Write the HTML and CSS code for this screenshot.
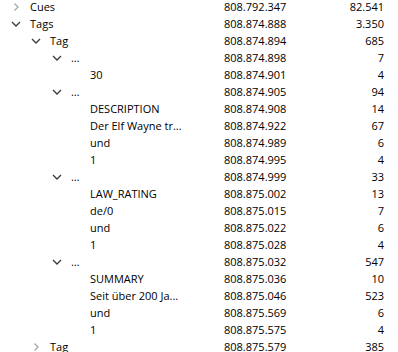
FILE: index.html
```
<!DOCTYPE html>
<html lang="en">
<head>
    <meta charset="UTF-8">
    <meta name="viewport" content="width=device-width, initial-scale=1.0">
    <title>Element tree</title>
    <link rel="stylesheet" href="styles.css">
</head>
<body>

    <div id="tree">
        <div class="row"><div class="name lvl-0"><span class="toggle closed"><svg viewBox="0 0 10 10"><polyline points="3.5,1.5 7,5 3.5,8.5"/></svg></span>Cues</div><div class="pos">808.792.347</div><div class="size">82.541</div></div>
        <div class="row"><div class="name lvl-0"><span class="toggle open"><svg viewBox="0 0 10 10"><polyline points="1,3 5,7 9,3"/></svg></span>Tags</div><div class="pos">808.874.888</div><div class="size">3.350</div></div>
        <div class="row"><div class="name lvl-1"><span class="toggle open"><svg viewBox="0 0 10 10"><polyline points="1,3 5,7 9,3"/></svg></span>Tag</div><div class="pos">808.874.894</div><div class="size">685</div></div>
        <div class="row"><div class="name lvl-2"><span class="toggle open"><svg viewBox="0 0 10 10"><polyline points="1,3 5,7 9,3"/></svg></span>…</div><div class="pos">808.874.898</div><div class="size">7</div></div>
        <div class="row"><div class="name lvl-3">30</div><div class="pos">808.874.901</div><div class="size">4</div></div>
        <div class="row"><div class="name lvl-2"><span class="toggle open"><svg viewBox="0 0 10 10"><polyline points="1,3 5,7 9,3"/></svg></span>…</div><div class="pos">808.874.905</div><div class="size">94</div></div>
        <div class="row"><div class="name lvl-3">DESCRIPTION</div><div class="pos">808.874.908</div><div class="size">14</div></div>
        <div class="row"><div class="name lvl-3">Der Elf Wayne tr...</div><div class="pos">808.874.922</div><div class="size">67</div></div>
        <div class="row"><div class="name lvl-3">und</div><div class="pos">808.874.989</div><div class="size">6</div></div>
        <div class="row"><div class="name lvl-3">1</div><div class="pos">808.874.995</div><div class="size">4</div></div>
        <div class="row"><div class="name lvl-2"><span class="toggle open"><svg viewBox="0 0 10 10"><polyline points="1,3 5,7 9,3"/></svg></span>…</div><div class="pos">808.874.999</div><div class="size">33</div></div>
        <div class="row"><div class="name lvl-3">LAW_RATING</div><div class="pos">808.875.002</div><div class="size">13</div></div>
        <div class="row"><div class="name lvl-3">de/0</div><div class="pos">808.875.015</div><div class="size">7</div></div>
        <div class="row"><div class="name lvl-3">und</div><div class="pos">808.875.022</div><div class="size">6</div></div>
        <div class="row"><div class="name lvl-3">1</div><div class="pos">808.875.028</div><div class="size">4</div></div>
        <div class="row"><div class="name lvl-2"><span class="toggle open"><svg viewBox="0 0 10 10"><polyline points="1,3 5,7 9,3"/></svg></span>…</div><div class="pos">808.875.032</div><div class="size">547</div></div>
        <div class="row"><div class="name lvl-3">SUMMARY</div><div class="pos">808.875.036</div><div class="size">10</div></div>
        <div class="row"><div class="name lvl-3">Seit über 200 Ja...</div><div class="pos">808.875.046</div><div class="size">523</div></div>
        <div class="row"><div class="name lvl-3">und</div><div class="pos">808.875.569</div><div class="size">6</div></div>
        <div class="row"><div class="name lvl-3">1</div><div class="pos">808.875.575</div><div class="size">4</div></div>
        <div class="row"><div class="name lvl-1"><span class="toggle closed"><svg viewBox="0 0 10 10"><polyline points="3.5,1.5 7,5 3.5,8.5"/></svg></span>Tag</div><div class="pos">808.875.579</div><div class="size">385</div></div>
    </div>

</body>
</html>
```

FILE: styles.css
```
body {
    background: white;
    margin: 0;
    font-family: 'Open Sans', 'Noto Sans', sans-serif;
    font-size: 11px;
    color: black;
    overflow: hidden;
}

#tree {
    margin-top: -2px;
}

.row {
    display: flex;
    height: 17px;
    line-height: 17px;
    white-space: nowrap;
}

.name {
    width: 224px;
    box-sizing: border-box;
    display: flex;
    align-items: center;
}

.lvl-0 { padding-left: 11px; }
.lvl-1 { padding-left: 31px; }
.lvl-2 { padding-left: 52px; }
.lvl-3 { padding-left: 90px; }

.toggle {
    width: 10px;
    height: 10px;
    margin-right: 9px;
    display: flex;
}

.toggle svg {
    width: 10px;
    height: 10px;
    fill: none;
    stroke-width: 1.3;
}

.toggle.open svg {
    stroke: #3a3a3a;
}

.toggle.closed svg {
    stroke: #a6a6a6;
}

.pos {
    width: 100px;
}

.size {
    width: 60px;
    text-align: right;
}
```
